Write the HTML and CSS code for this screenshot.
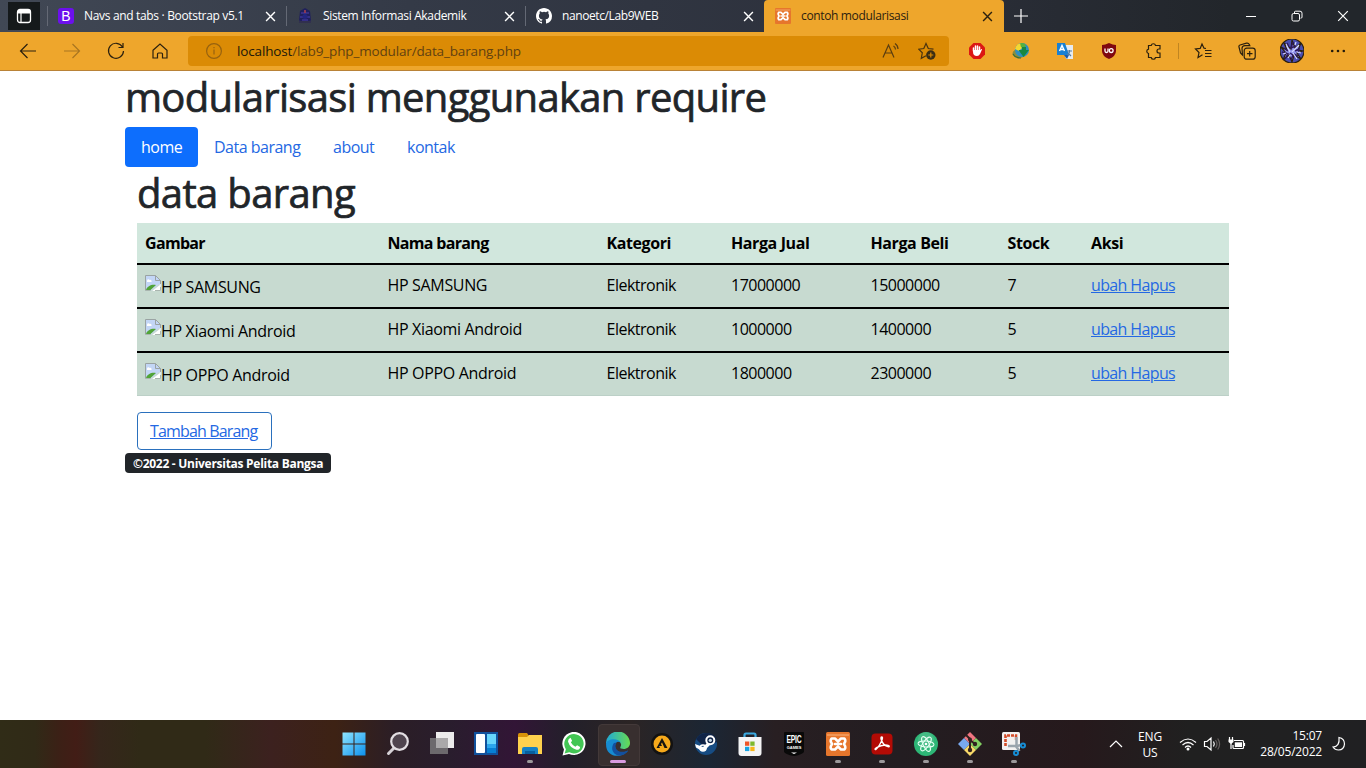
FILE: index.html
```html
<!DOCTYPE html>
<html lang="id">
<head>
<meta charset="utf-8">
<title>contoh modularisasi</title>
<link rel="stylesheet" href="styles.css">
</head>
<body>
<svg class="defs" aria-hidden="true">
  <symbol id="close" viewBox="0 0 10 10"><path d="M1 1l8 8M9 1L1 9" fill="none" stroke="currentColor" stroke-width="1.3"/></symbol>
  <symbol id="xampp" viewBox="0 0 24 24"><rect width="24" height="24" rx="1.5" fill="#e6762c"/><path d="M1 3h22" stroke="#f3a265" stroke-width="1.5"/><path d="M5.500 6.500h3.500l3 3 3-3h3.500q2 2.500-.7 5.500 2.700 3 .7 5.500H15l-3-3-3 3H5.500q-2-2.500.7-5.500-2.700-3-.7-5.500zM9 12h6" fill="none" stroke="#fff" stroke-width="2.500" stroke-linejoin="round" stroke-linecap="round"/></symbol>
  <symbol id="broken" viewBox="0 0 16 16"><path d="M.5.5h10l5 5v10H.5z" fill="#c3d6f6"/><path d="M2 6c0-2 2-2 2.500-1C6 4 7 6 6.500 7H2z" fill="#fff"/><path d="M1 15c1-4 6-6 10-5l-6 5.500z" fill="#51a438"/><path d="M15.500 9L6.500 16h9z" fill="#fff"/><path d="M.5 15.500V.5h10l5 5V9M10.500.5v5h5" fill="none" stroke="#9aa3a3"/><path d="M.5 15.500h5M10 15.500h5.500V12" fill="none" stroke="#a9b5af"/><path d="M14.500 9.500l-8 6" stroke="#c8dad2" stroke-width="1.500"/></symbol>
</svg>

<header class="browser">
  <div class="tabs">
    <div class="tab-actions"><svg width="16" height="16" viewBox="0 0 16 16"><rect x="1.500" y="1.500" width="13" height="13" rx="2.500" fill="none" stroke="#fff" stroke-width="1.300"/><path d="M2 2h12v3.500H2z" fill="#fff"/><path d="M5 5v9" stroke="#fff" stroke-width="1.200"/></svg></div>
    <div class="tab">
      <span class="favicon bootstrap">B</span>
      <span class="tab-title t1">Navs and tabs · Bootstrap v5.1</span>
      <svg class="x"><use href="#close"/></svg>
    </div>
    <div class="tab">
      <svg class="favicon" viewBox="0 0 16 16"><path d="M8 0l5 3 1 9-2 3H4l-2-3 1-9z" fill="#20205c"/><path d="M8 2v3M4 5h8M3 9h10M5 12h6" stroke="#3d3493" stroke-width="1.300"/><path d="M8 2v3" stroke="#a83c43" stroke-width="1.500"/><circle cx="8" cy="8.500" r="2.500" fill="#24257f"/><path d="M2 14h12" stroke="#31304e" stroke-width="2"/></svg>
      <span class="tab-title t2">Sistem Informasi Akademik</span>
      <svg class="x"><use href="#close"/></svg>
    </div>
    <div class="tab">
      <svg class="favicon" viewBox="0 0 16 16"><path fill="#fff" d="M8 0C3.580 0 0 3.580 0 8c0 3.540 2.290 6.530 5.470 7.590.4.070.55-.17.55-.38 0-.19-.01-.82-.01-1.490-2.010.37-2.530-.49-2.690-.94-.09-.23-.48-.94-.82-1.130-.28-.15-.68-.52-.01-.53.63-.01 1.080.58 1.230.82.72 1.210 1.870.87 2.330.66.07-.52.28-.87.51-1.070-1.780-.2-3.640-.89-3.640-3.950 0-.87.31-1.590.82-2.150-.08-.2-.36-1.020.08-2.120 0 0 .67-.21 2.200.82a7.600 7.600 0 0 1 4 0c1.530-1.040 2.200-.82 2.200-.82.44 1.100.16 1.920.08 2.120.51.560.82 1.270.82 2.150 0 3.070-1.870 3.750-3.650 3.950.29.25.54.73.54 1.480 0 1.070-.01 1.930-.01 2.200 0 .21.150.46.55.38A8 8 0 0 0 16 8c0-4.420-3.580-8-8-8z"/></svg>
      <span class="tab-title t3">nanoetc/Lab9WEB</span>
      <svg class="x"><use href="#close"/></svg>
    </div>
    <div class="tab active">
      <svg class="favicon"><use href="#xampp"/></svg>
      <span class="tab-title t4">contoh modularisasi</span>
      <svg class="x"><use href="#close"/></svg>
    </div>
    <svg class="new-tab" viewBox="0 0 14 14"><path d="M7 0v14M0 7h14" stroke="#fff" stroke-width="1.200"/></svg>
    <div class="window-controls">
      <svg viewBox="0 0 12 12"><path d="M1 6.500h10" stroke="#fff"/></svg>
      <svg viewBox="0 0 12 12"><rect x="1" y="3.500" width="7.500" height="7.500" rx="1.500" fill="none" stroke="#fff"/><path d="M3.500 3V2q0-.8 1-.8H9q2 0 2 2v4q0 1-1.500 1" fill="none" stroke="#fff"/></svg>
      <svg viewBox="0 0 12 12"><path d="M1.200 1.200l9.600 9.600M10.800 1.200l-9.600 9.600" stroke="#fff" stroke-width="1.200"/></svg>
    </div>
  </div>

  <div class="toolbar">
    <div class="nav-buttons">
      <svg viewBox="0 0 18 18"><path d="M17 9H1.500M8.500 2l-7 7 7 7"/></svg>
      <svg class="disabled" viewBox="0 0 18 18"><path d="M1 9h15.500M9.500 2l7 7-7 7"/></svg>
      <svg viewBox="0 0 18 18"><path d="M15.500 5A7.500 7.500 0 1 0 16.500 9M16 1v4.500h-4.500"/></svg>
      <svg viewBox="0 0 18 18"><path d="M2 8.200L9 2l7 6.200V16h-4.500v-4a1 1 0 0 0-1-1h-3a1 1 0 0 0-1 1v4H2z"/></svg>
    </div>
    <div class="address">
      <svg class="info" viewBox="0 0 18 18"><circle cx="9" cy="9" r="7.400"/><path d="M9 7.500v5M9 5v1.300"/></svg>
      <span class="url"><b>localhost</b>/lab9_php_modular/data_barang.php</span>
      <svg class="read" viewBox="0 0 18 18"><path d="M1 15.500L6.500 3 12 15.500M3 11h7M11.500 4q2 1.300 2 3.500M13 1.500q3 2 3 5.500"/></svg>
      <svg class="fav" viewBox="0 0 18 18"><path d="M8 13.800L3.300 16.300l1-5.500L.7 7.200l5.100-.7L8 1.500l2.300 5 5.200.7"/><circle cx="12.800" cy="13" r="4.700" fill="#3b2e14" stroke="none"/><path d="M12.800 10.500v5M10.300 13h5" stroke="#db8b05"/></svg>
    </div>
    <div class="extensions">
      <svg viewBox="0 0 18 18"><path d="M5.500 1h7L17 5.500v7L12.500 17h-7L1 12.500v-7z" fill="#dc1713" stroke="none"/><path d="M5.500 9V6M7.500 8V4M9.500 8V4M11.500 8.500V5" stroke="#fff" stroke-width="1.500" stroke-linecap="round"/><path d="M5 8h7.300l1-1q1.200-.2.500 1L12 12q-1 2-3 2-4 0-4-4z" fill="#fff" stroke="none"/></svg>
      <svg viewBox="0 0 18 18"><ellipse cx="7" cy="11.500" rx="6.500" ry="4.500" fill="#8b8d3c" stroke="none"/><circle cx="10" cy="8" r="7" fill="#2f8fc0" stroke="none"/><path d="M3 7q1-5 6-6l2 4-4 4z" fill="#f4d831" stroke="none"/><path d="M8 1.300q4-1 6 2l-2 3-3-1z" fill="#58b13d" stroke="none"/><path d="M6.500 8H10V5h4v3h3l-5.500 7z" fill="#188841" stroke="none"/><path d="M1 12q2 4 8 4" stroke="#3c7032"/></svg>
      <svg viewBox="0 0 18 18"><path d="M7 3h10v14h-7z" fill="#e6eaee" stroke="none"/><path d="M1 1h8l4 12H1z" fill="#1880d3" stroke="none"/><path d="M8 13h5l-2 4z" fill="#175aae" stroke="none"/><path d="M3.500 9L6 3.500 8.500 9M4.500 7.500h3" stroke="#fff" stroke-width="1.400"/><path d="M11 9h5M13.500 8v1q0 3-2.500 4M12 11l3 3" stroke="#527da7"/></svg>
      <svg viewBox="0 0 18 18"><path d="M9 1q4 2 7 2v6q0 5-7 8-7-3-7-8V3q3 0 7-2z" fill="#800810" stroke="none"/><path d="M5 6.500V9q0 1.500 1.500 1.500T8 9V6.500" stroke="#fff" stroke-width="1.300"/><circle cx="11.200" cy="8.600" r="1.900" stroke="#fff" stroke-width="1.300"/></svg>
      <svg viewBox="0 0 18 18"><path d="M4.500 3.500h2.700a2.200 2.200 0 0 1 4.300 0H16V7h-1a2 2 0 0 0 0 4h1v4.500h-4.500a2.200 2.200 0 0 1-4.300 0H4.500V11.500a2.200 2.200 0 0 1 0-4.300z"/></svg>
    </div>
    <span class="divider"></span>
    <div class="tools">
      <svg viewBox="0 0 18 18"><path d="M8.500 12.800L4 15.500l1-5L1.500 7l4.700-.6L8 2l2 4.200 2 .3M11 8.500h6.500M11 11.500h6.500M11 14.500h6.500"/></svg>
      <svg viewBox="0 0 18 18"><rect x="6.200" y="6.200" width="11" height="11" rx="2.500"/><path d="M11.700 9v5.500M9 11.700h5.500M4.500 13L2.500 11 1 5Q.6 3.500 2 3L8.500 1.200q2-.4 2.800 1.300l.5 1.200H7Q4 3.700 4 6.500z"/></svg>
    </div>
    <svg class="avatar" viewBox="0 0 24 24"><circle cx="12" cy="12" r="12" fill="#4a4eb1"/><path d="M1 8l6 3-3-7 7 6 1-9 3 8 6-5-3 7 5 1-6 2 4 6-7-4-2 7-3-7-6 5 3-7z" fill="#8f93ee"/><path d="M2 13l6 2-3 5M13 3l-2 6 5-2M15 12l4-2-1 4M10 14l3 2-2 5M7 4l2 4M4 9l4 3M18 17l-4-2" fill="none" stroke="#2d195e" stroke-width="1.500"/><path d="M6 5l4 8M19 6l-7 7M17 20l-4-6M3 15l3-1M16 3l-1 3M21 14l-4-1M8 19l2-3" stroke="#d4d7ff"/></svg>
    <svg class="more" viewBox="0 0 18 18"><circle cx="3.200" cy="9" r="1.300"/><circle cx="9" cy="9" r="1.300"/><circle cx="14.800" cy="9" r="1.300"/></svg>
  </div>
</header>

<main class="page">
  <h1 class="site-title">modularisasi menggunakan require</h1>
  <nav class="pills">
    <a class="current">home</a>
    <a class="w2">Data barang</a>
    <a class="w3">about</a>
    <a class="w4">kontak</a>
  </nav>
  <section class="content">
    <h1 class="section-title">data barang</h1>
    <table>
      <colgroup><col class="c1"><col class="c2"><col class="c3"><col class="c4"><col class="c5"><col class="c6"><col></colgroup>
      <thead><tr><th>Gambar</th><th>Nama barang</th><th>Kategori</th><th>Harga Jual</th><th>Harga Beli</th><th>Stock</th><th>Aksi</th></tr></thead>
      <tbody>
        <tr><td><span class="missing"><svg><use href="#broken"/></svg>HP SAMSUNG</span></td><td>HP SAMSUNG</td><td>Elektronik</td><td>17000000</td><td>15000000</td><td>7</td><td><a>ubah Hapus</a></td></tr>
        <tr><td><span class="missing"><svg><use href="#broken"/></svg>HP Xiaomi Android</span></td><td>HP Xiaomi Android</td><td>Elektronik</td><td>1000000</td><td>1400000</td><td>5</td><td><a>ubah Hapus</a></td></tr>
        <tr><td><span class="missing"><svg><use href="#broken"/></svg>HP OPPO Android</span></td><td>HP OPPO Android</td><td>Elektronik</td><td>1800000</td><td>2300000</td><td>5</td><td><a>ubah Hapus</a></td></tr>
      </tbody>
    </table>
    <a class="button">Tambah Barang</a>
  </section>
  <footer class="badge">©2022 - Universitas Pelita Bangsa</footer>
</main>

<div class="taskbar">
  <div class="apps">
    <div class="app"><svg viewBox="0 0 24 24"><defs><linearGradient id="win" x2="1" y2="1"><stop stop-color="#8fe5ff"/><stop offset="1" stop-color="#0c91ed"/></linearGradient></defs><path d="M.5.500h11v11H.5zM12.500.500h11v11h-11zM.5 12.500h11v11H.5zM12.500 12.500h11v11h-11z" fill="url(#win)"/></svg></div>
    <div class="app"><svg viewBox="0 0 24 24"><path d="M8 16l-5.500 5.500" stroke="#d5d1d5" stroke-width="3" stroke-linecap="round"/><circle cx="13.500" cy="9.500" r="8.300" fill="#50454f" stroke="#e3dfe3" stroke-width="2.200"/></svg></div>
    <div class="app"><svg viewBox="0 0 24 24"><path d="M6 0h18v16H6z" fill="#ecebec"/><path d="M0 6h18v16H0z" fill="#6c696d"/><path d="M6 6h12v10H6z" fill="#aaa8aa"/></svg></div>
    <div class="app"><svg viewBox="0 0 24 24"><path d="M0 0h24v23H0z" fill="#11519c"/><rect x="2" y="2" width="9" height="19" rx="1" fill="#fff"/><path d="M13 2h9v10h-9z" fill="#67d5fb"/><path d="M13 12h9v4h-9z" fill="#2ba5ec"/><path d="M13 16h9v5h-9z" fill="#0780d4"/></svg></div>
    <div class="app open"><svg viewBox="0 0 24 24"><path d="M0 5V2.500Q0 1 1.500 1H9l2 3v2z" fill="#d89208"/><path d="M0 5h9l2-2h13v19H0z" fill="#ffd14d"/><path d="M4 22v-5q0-2 2-2h12q2 0 2 2v5z" fill="#1681c4"/><path d="M7 19h10v3H7z" fill="#075f9f"/></svg></div>
    <div class="app"><svg viewBox="0 0 24 24"><path d="M.5 23.500L2 17.500A11.600 11.600 0 1 1 7 22z" fill="#fff"/><path d="M2.600 21.500l1.300-4.300A9.700 9.700 0 1 1 7.300 20.300z" fill="#42c654"/><path d="M8.500 5.800l1.600 3-1.200 1.700q1.700 3 4.500 4.300l1.700-1.500 3 1.600q0 3-3.600 2.800Q8 16.200 6 9.500q0-2.500 2.500-3.700z" fill="#fff"/></svg></div>
    <div class="app selected"><svg viewBox="0 0 24 24"><defs><linearGradient id="edge" x2="1"><stop stop-color="#20a8d8"/><stop offset="1" stop-color="#67db51"/></linearGradient></defs><path d="M0 12A12 12 0 0 1 24 11c0 5-5 7-9 5.500-2-.8.500-2 0-4.500-1-4-9-5-15 0z" fill="url(#edge)"/><path d="M0 12C1 6 13 6 15 11c-3-3-6 0-6 3 0 5 6 9 13 4.500C17 26 0 27 0 12z" fill="#168bd0"/><path d="M8 11c-5 7 1 14 8 12.300 3-.8 5-2.800 6-4.800-7 3-12.500.5-12.500-4.500 0-1.500.5-2.500 1.500-3.500z" fill="#12509f"/></svg></div>
    <div class="app"><svg viewBox="0 0 24 24"><circle cx="12" cy="12" r="11" fill="#131211"/><circle cx="12" cy="12" r="8.500" fill="#f6a91b"/><path d="M12 6L6.500 16H10l-1-2h3l-1-2 1-1.500 2.500 5.500h3z" fill="#171511"/></svg></div>
    <div class="app"><svg viewBox="0 0 24 24"><circle cx="12" cy="12" r="11" fill="#164c83"/><path d="M2 7Q6 0 14 1t9 9L10 15z" fill="#102447"/><path d="M1 12l8 3 4-4 4 1-4 4-2 3-4-.5-5-3z" fill="#fff"/><circle cx="16.300" cy="8.300" r="4" fill="none" stroke="#fff" stroke-width="2"/><circle cx="16.300" cy="8.300" r="1.600" fill="#c9dce9"/><circle cx="9" cy="16" r="3" fill="none" stroke="#fff" stroke-width="1.500"/></svg></div>
    <div class="app"><svg viewBox="0 0 24 24"><path d="M6.500 6V3q0-1.500 1.500-1.500h8q1.500 0 1.500 1.500v3" fill="none" stroke="#3aa8df" stroke-width="2.200"/><path d="M.5 5h23v16q0 3-3 3h-17q-3 0-3-3z" fill="#f4f4f5"/><path d="M7 9.500h4.300v4.300H7z" fill="#ee5528"/><path d="M12.300 9.500h4.300v4.300h-4.300z" fill="#7eb82d"/><path d="M7 14.800h4.300v4.300H7z" fill="#16a3e3"/><path d="M12.300 14.800h4.300v4.300h-4.300z" fill="#f8b61a"/></svg></div>
    <div class="app epic"><svg viewBox="0 0 24 24"><path d="M2 1q0-1 1-1h18q1 0 1 1v19q-3 3-10 4-7-1-10-4z" fill="#090909"/><path d="M9 20.500h6l-3 1.500z" fill="#fff"/></svg><span><strong>EPIC</strong><small>GAMES</small></span></div>
    <div class="app open"><svg><use href="#xampp"/></svg></div>
    <div class="app open"><svg viewBox="0 0 24 24"><rect x="1.500" y="1.500" width="21" height="21" rx="4" fill="#b30b05"/><path d="M11.800 5c-2 0-.2 5 3 8.400 3.500 1.500 5.300 2 4 .2-2.600-1-7.800-.5-12.300 2-2.500 1.600-1.500 3.200.5.800C10 13 14 5 11.800 5z" fill="none" stroke="#fff" stroke-width="1.400"/></svg></div>
    <div class="app open"><svg viewBox="0 0 24 24"><circle cx="12" cy="12" r="12" fill="#2db676"/><circle cx="12" cy="8" r="8" fill="#5cc194" opacity=".5"/><g fill="none" stroke="#e6fff3"><ellipse cx="12" cy="12" rx="3" ry="8" transform="rotate(-25 12 12)"/><ellipse cx="12" cy="12" rx="3" ry="8" transform="rotate(35 12 12)"/><ellipse cx="12" cy="12" rx="3" ry="8" transform="rotate(95 12 12)"/></g><circle cx="12" cy="12" r="1.300" fill="#fff"/></svg></div>
    <div class="app open"><svg viewBox="0 0 24 24"><path d="M12 0l6 6-6 6-6-6z" fill="#ef7580"/><path d="M6 6l6 6-6 6-6-6z" fill="#78a9ef"/><path d="M18 6l6 6-6 6-6-6z" fill="#82cf62"/><path d="M12 12l6 6-6 6-6-6z" fill="#f8d969"/><path d="M8 3l4 4v12M12 8l5 4" stroke="#30211f" stroke-width="2" fill="none"/><circle cx="12" cy="7.500" r="2" fill="#30211f"/><circle cx="17" cy="12" r="2.200" fill="#30211f"/><circle cx="12" cy="18" r="2.200" fill="#30211f"/></svg></div>
    <div class="app open"><svg viewBox="0 0 24 24"><rect width="18" height="18" rx="1.500" fill="#f2f1f1"/><path d="M3.500 14V3.500H14v4" fill="none" stroke="#d34b28" stroke-width="2.600" stroke-dasharray="3 1"/><path d="M14.500 5v10l3 4M6 14h9l4-1" fill="none" stroke="#99a4ad" stroke-width="2.500"/><circle cx="21" cy="13.500" r="2" fill="none" stroke="#168dd4" stroke-width="2"/><circle cx="14" cy="21" r="2" fill="none" stroke="#168dd4" stroke-width="2"/></svg></div>
  </div>
  <div class="tray">
    <svg class="chevron" viewBox="0 0 14 14"><path d="M1 10l6-6 6 6"/></svg>
    <div class="language"><span>ENG</span><span>US</span></div>
    <svg class="wifi" viewBox="0 0 18 16"><path d="M1 6.500q8-7 16 0M3.500 9q5.500-5 11 0M6 11.500q3-3 6 0"/><circle cx="9" cy="13" r="1.500" fill="#fff" stroke="none"/></svg>
    <svg class="sound" viewBox="0 0 18 16"><path d="M1.500 5.500H4L8 2v12l-4-3.500H1.500zM10.500 5.500q1.600 2.500 0 5"/><path d="M12.500 4q3 4 0 8M14.700 2.500q3.800 5.500 0 11" stroke="#66605f"/></svg>
    <svg class="battery" viewBox="0 0 18 16"><path d="M6 4.500h8.500q1 0 1 1v6q0 1-1 1H6q-1 0-1-1V9M16.500 7v3"/><path d="M6.800 6.300H14V11H6.800z" fill="#fff" stroke="none"/><path d="M1.500 1v3M4.500 1v3M3 7v6" /><path d="M.5 3.500h5V6L3 8 .5 6z" fill="#fff" stroke="none"/></svg>
    <div class="clock"><span>15:07</span><span class="date">28/05/2022</span></div>
    <svg class="moon" viewBox="0 0 16 16"><path d="M8 1.500q5.500 1 5.500 6.500-.5 6-6 6-3.500 0-5.500-3Q9 10.500 8 1.500z"/></svg>
  </div>
</div>
</body>
</html>
```
FILE: styles.css
```css
* { box-sizing: border-box; }
body {
  margin: 0;
  width: 1366px;
  height: 768px;
  overflow: hidden;
  display: flex;
  flex-direction: column;
  background: #fff;
  color: #212529;
  font-family: "Open Sans", "Noto Sans", sans-serif;
  font-size: 16px;
  line-height: 24px;
}
svg { display: block; flex: none; }
.defs { position: absolute; width: 0; height: 0; }

/* Browser frame */
.browser { flex: none; font-size: 12px; }
.tabs {
  height: 32px;
  display: flex;
  align-items: center;
  background: linear-gradient(90deg, #414855, #343a47 30%, #2c303b 65%, #22262b 90%, #22262b);
  color: #fff;
}
.tab-actions {
  width: 32px; height: 28px;
  margin: 0 7px 0 8px;
  display: flex; align-items: center; justify-content: center;
  background: #15191b;
}
.tab {
  width: 239px; height: 32px;
  display: flex; align-items: center;
  padding: 0 10px;
  background: linear-gradient(#646975, #646975) 0 50% / 1px 20px no-repeat;
}
.tab.active {
  width: 240px;
  background: #eea62c;
  color: #2c210f;
  border-radius: 4px 4px 0 0;
}
.favicon { width: 16px; height: 16px; flex: none; margin-left: 1px; }
.bootstrap {
  border-radius: 3px;
  background: #6c10ed;
  font: 14px/16px "Liberation Sans", sans-serif;
  text-align: center;
}
.tab-title { margin-left: 10px; flex: 1; white-space: nowrap; line-height: 16px; }
.x { width: 11px; height: 11px; }
.active .x { margin-right: 1px; }
.t1 { letter-spacing: -.33px; }
.t2 { letter-spacing: -.35px; }
.t3 { letter-spacing: -.4px; }
.t4 { letter-spacing: -.35px; }
.new-tab { width: 14px; height: 14px; margin-left: 10px; }
.window-controls { margin-left: auto; display: flex; }
.window-controls svg { width: 12px; height: 12px; margin: 0 17px; }
.toolbar {
  height: 39px;
  display: flex;
  align-items: center;
  background: #eea62c;
  border-bottom: 1px solid #b98237;
}
.toolbar svg { width: 18px; height: 18px; fill: none; stroke: #2b200e; stroke-width: 1.2; }
.nav-buttons { display: flex; gap: 26px; padding-left: 19px; }
.toolbar .disabled { stroke: #a87521; }
.address {
  width: 761px; height: 30px;
  margin-left: 19px;
  padding: 0 13px 0 17px;
  display: flex; align-items: center;
  border-radius: 4px;
  background: #db8b05;
}
.toolbar .info { stroke: #97620f; }
.url { margin-left: 14px; flex: 1; font-size: 13.5px; letter-spacing: -.15px; color: #614111; }
.url b { font-weight: 400; color: #20180a; }
.toolbar .read { margin-right: 18px; stroke: #5b3e11; }
.toolbar .fav { stroke: #4b3410; }
.extensions { display: flex; gap: 26px; margin-left: 19px; }
.divider { width: 1px; height: 16px; margin: 0 15px 0 16px; background: #c08521; }
.tools { display: flex; gap: 26px; }
.toolbar .avatar { width: 24px; height: 24px; margin-left: 24px; }
.toolbar .more { margin-left: 25px; fill: #21190b; stroke: none; }

/* Page */
.page { flex: 1; width: 1116px; margin-left: 125px; }
h1 {
  height: 48px; margin: 0 0 8px; padding-top: 2px;
  font-size: 40px; line-height: 48px; font-weight: 500;
  -webkit-text-stroke: .7px #212529;
  white-space: nowrap;
}
.site-title { letter-spacing: -.69px; }
.section-title { letter-spacing: -.65px; }
.pills { display: flex; height: 40px; color: #2468e3; white-space: nowrap; letter-spacing: -.5px; }
.pills a { padding: 8px 0 8px 16px; width: 119px; }
.pills .current { width: 73px; background: #0d6efd; color: #fff; border-radius: 4px; }
.pills .w3 { width: 74px; }
.content { padding: 0 12px; }
table { width: 1092px; margin-bottom: 16px; table-layout: fixed; border-collapse: separate; border-spacing: 0; background: #c7dad0; color: #000; }
.c1 { width: 242.500px; }
.c2 { width: 219px; }
.c3 { width: 124.500px; }
.c4 { width: 139.500px; }
.c5 { width: 137px; }
.c6 { width: 83.500px; }
th, td { padding: 8px; text-align: left; vertical-align: top; white-space: nowrap; border-bottom: 2px solid #000; }
th { height: 42px; background: #d1e7dd; letter-spacing: -.4px; }
th:nth-child(-n+2) { letter-spacing: -.68px; }
td { height: 44px; letter-spacing: -.33px; }
td:nth-child(n+3) { letter-spacing: -.5px; }
td:last-child { letter-spacing: -.63px; }
tr:last-child td { height: 43px; border-bottom: 1px solid #bcd0c7; }
thead tr:last-child th { border-bottom: 2px solid #000; }
td a { color: #2468e3; text-decoration: underline; }
.missing { display: flex; align-items: flex-start; margin-top: 2px; }
.missing svg { width: 16px; height: 16px; }
.button {
  display: block; width: 135px; height: 38px;
  padding: 6px 12px;
  border: 1px solid #2a70bd; border-radius: 4px;
  color: #2468e3; text-decoration: underline;
  white-space: nowrap; letter-spacing: -.85px;
}
.badge {
  width: 206px; height: 20px;
  margin-top: 3px; padding: 0 8px;
  border-radius: 4px;
  background: #212529; color: #fff;
  font-size: 12px; line-height: 21px; font-weight: 700;
  letter-spacing: -.28px;
  white-space: nowrap;
}

/* Taskbar */
.taskbar {
  height: 48px; flex: none;
  display: flex; align-items: center;
  background: linear-gradient(90deg, #302c17 0, #302a17 35px, #3c2016 60px, #421d16 76px, #35261b 100px, #302a17 140px, #302a17 205px, #3c211f 270px, #3d2214 335px, #2b1e26 395px, #291d2d 450px, #321536 515px, #23202a 570px, #2b2424 630px, #1b2634 710px, #281f22 775px, #231d21 900px, #26191c 1080px, #202020 1190px, #202022);
  color: #fff;
}
.apps { display: flex; padding-left: 332px; }
.app { position: relative; width: 44px; height: 48px; display: flex; align-items: center; justify-content: center; }
.app svg { width: 24px; height: 24px; }
.app.open::after {
  content: ""; position: absolute; left: 19px; bottom: 5px;
  width: 6px; height: 3px; border-radius: 2px; background: #9c999b;
}
.app.selected::before {
  content: ""; position: absolute; left: 2px; top: 4px;
  width: 40px; height: 40px; border-radius: 4px; background: #382f2f; border: 1px solid #433939;
}
.app.selected svg { position: relative; }
.app.selected::after {
  content: ""; position: absolute; left: 14px; bottom: 5px;
  width: 16px; height: 3px; border-radius: 2px; background: #d99be0;
}
.epic span {
  position: absolute; top: 15px; left: 0; width: 44px;
  text-align: center; font-family: "Liberation Sans", sans-serif;
}
.epic strong { display: block; font-size: 8px; line-height: 10px; letter-spacing: -.3px; transform: scale(.85, 1.4); }
.epic small { display: block; font-size: 4px; line-height: 6px; font-weight: 700; }
.tray { margin-left: auto; display: flex; align-items: center; font-size: 12px; line-height: 16px; }
.tray svg { fill: none; stroke: #fff; stroke-width: 1.2; }
.chevron { width: 14px; height: 14px; }
.language { width: 30px; margin: 2px 14px 0 12px; display: flex; flex-direction: column; align-items: center; letter-spacing: -.2px; }
.wifi, .sound, .battery { width: 18px; height: 16px; }
.wifi { margin-right: 6px; }
.sound { margin-right: 7px; }
.clock { width: 66px; margin: 0 9px 0 10px; display: flex; flex-direction: column; align-items: flex-end; white-space: nowrap; letter-spacing: -.2px; }
.moon { width: 16px; height: 16px; margin-right: 19px; }
```
